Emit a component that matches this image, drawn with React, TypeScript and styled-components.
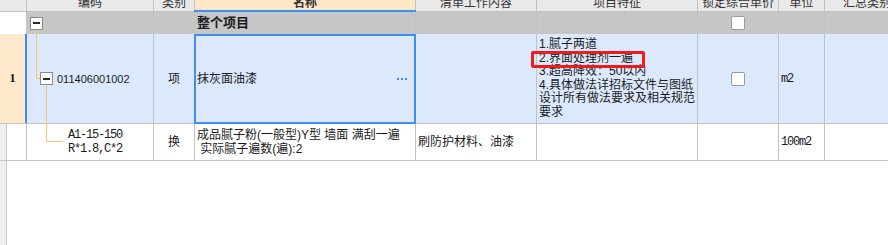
import styled, { createGlobalStyle } from 'styled-components';

const GlobalStyle = createGlobalStyle`
  html, body {
    margin: 0;
    padding: 0;
    background: #fff;
  }
  body {
    font-family: 'Liberation Sans', 'Noto Sans CJK SC', sans-serif;
    font-size: 12px;
    color: #111;
  }
`;

const COLS = '27px 127px 41px 221px 121px 161px 81px 46px 85px';
const GRID = '#c2c2c2';
const BLUE = '#3c8ef0';
const ORANGE = '#ffc36a';

const Page = styled.div`
  height: 100vh;
  overflow: hidden;
  display: flex;
  flex-direction: column;
`;

const Sheet = styled.div`
  margin-top: -11px;
  width: 910px;
  display: flex;
  flex-direction: column;
`;

const Row = styled.div<{ $h: number; $bg: string; $line?: boolean }>`
  display: grid;
  grid-template-columns: ${COLS};
  height: ${(p) => p.$h}px;
  background: ${(p) => p.$bg};
  border-bottom: ${(p) => (p.$line ? `1px solid ${GRID}` : 'none')};
  box-sizing: border-box;
`;

const Cell = styled.div<{ $center?: boolean; $bg?: string }>`
  position: relative;
  display: flex;
  align-items: center;
  justify-content: ${(p) => (p.$center ? 'center' : 'flex-start')};
  padding: 0 2px;
  border-right: 1px solid ${GRID};
  box-sizing: border-box;
  min-width: 0;
  white-space: nowrap;
  background: ${(p) => p.$bg ?? 'transparent'};
`;

const HeadCell = styled(Cell)<{ $active?: boolean }>`
  padding-top: 2px;
  color: #333;
  font-family: 'Noto Sans CJK SC', sans-serif;
  font-weight: ${(p) => (p.$active ? 700 : 400)};

  &::after {
    content: '';
    display: ${(p) => (p.$active ? 'block' : 'none')};
    position: absolute;
    left: -1px;
    right: -1px;
    bottom: -1px;
    height: 2px;
    background: ${BLUE};
  }
`;

const RowNo = styled(Cell)<{ $current?: boolean }>`
  font-family: 'Liberation Serif', serif;
  font-weight: 700;
  font-size: 12px;
  border-right: ${(p) => (p.$current ? `2px solid ${BLUE}` : `1px solid ${GRID}`)};
`;

const FrozenRowNo = styled(Cell)`
  box-shadow: inset 6px 0 0 #f0f0f0, inset 7px 0 0 #c8c8c8;
`;

const TreeCell = styled(Cell)<{ $indent: number }>`
  padding-left: ${(p) => p.$indent}px;
`;

const Connector = styled.span<{ $x: number; $y: number; $w: number; $h: number }>`
  position: absolute;
  left: ${(p) => p.$x}px;
  top: ${(p) => p.$y}px;
  width: ${(p) => p.$w}px;
  height: ${(p) => p.$h}px;
  background: ${ORANGE};
`;

const Toggle = styled.span`
  position: relative;
  z-index: 1;
  display: inline-flex;
  align-items: center;
  justify-content: center;
  width: 13px;
  height: 13px;
  box-sizing: border-box;
  border: 1px solid #8a8a8a;
  background: #fff;
  margin-right: 4px;

  &::before {
    content: '';
    width: 7px;
    height: 2px;
    background: #2a2a2a;
  }
`;

const Code = styled.span`
  font-family: 'Liberation Sans', sans-serif;
  font-size: 11px;
  color: #1a1a1a;
`;

const Mono = styled.span`
  font-family: 'Liberation Mono', monospace;
  font-size: 12px;
  letter-spacing: -1.2px;
  line-height: 14px;
  color: #1a1a1a;
`;

const Text = styled.span<{ $bold?: boolean; $size?: number }>`
  font-family: 'Liberation Sans', 'Noto Sans CJK SC', sans-serif;
  font-size: ${(p) => p.$size ?? 12}px;
  font-weight: ${(p) => (p.$bold ? 700 : 400)};
  line-height: 14px;
  color: #1a1a1a;
`;

const Lines = styled.div<{ $lh: number }>`
  display: flex;
  flex-direction: column;
  line-height: ${(p) => p.$lh}px;
  font-family: 'Liberation Sans', 'Noto Sans CJK SC', sans-serif;
  font-size: 12px;
  color: #1a1a1a;
  white-space: pre;
`;

const SelectedCell = styled(Cell)`
  &::after {
    content: '';
    position: absolute;
    left: -1px;
    right: -1px;
    top: 0;
    bottom: -1px;
    border: 2px solid ${BLUE};
    pointer-events: none;
  }
`;

const MoreDots = styled.span`
  position: absolute;
  right: 8px;
  top: 44px;
  display: flex;
  gap: 2px;

  & i {
    width: 2px;
    height: 2px;
    background: ${BLUE};
  }
`;

const Checkbox = styled.span`
  width: 14px;
  height: 14px;
  box-sizing: border-box;
  border: 1px solid #9b9b9b;
  border-radius: 2px;
  background: #fff;
`;

const Mark = styled.span`
  position: absolute;
  left: -6px;
  top: 17px;
  width: 114px;
  height: 17px;
  box-sizing: border-box;
  border: 3px solid #ee1b1b;
  border-radius: 2px;
  pointer-events: none;
`;

const Filler = styled.div`
  flex: 1;
  display: flex;
`;

const Strip = styled.div`
  width: 7px;
  box-sizing: border-box;
  background: #f0f0f0;
  border-right: 1px solid #c8c8c8;
`;

const headers = ['编码', '类别', '名称', '清单工作内容', '项目特征', '锁定综合单价', '单位', '汇总类别'];

const features = [
  '1.腻子两道',
  '2.界面处理剂一遍',
  '3.超高降效：50以内',
  '4.具体做法详招标文件与图纸',
  '设计所有做法要求及相关规范',
  '要求',
];

export default function App() {
  return (
    <Page>
      <GlobalStyle />
      <Sheet>
        <Row $h={23} $bg="#e9e9e9" $line>
          <HeadCell />
          {headers.map((h) => (
            <HeadCell key={h} $center $active={h === '名称'} $bg={h === '名称' ? '#fde7c7' : undefined}>
              {h}
            </HeadCell>
          ))}
        </Row>

        <Row $h={22} $bg="#c6c6c6">
          <Cell $bg="#fff" />
          <TreeCell $indent={3}>
            <Toggle />
            <Connector $x={9} $y={17} $w={1} $h={6} />
          </TreeCell>
          <Cell />
          <Cell>
            <Text $bold $size={13}>
              整个项目
            </Text>
          </Cell>
          <Cell />
          <Cell />
          <Cell $center>
            <Checkbox />
          </Cell>
          <Cell />
          <Cell />
        </Row>

        <Row $h={90} $bg="#dce9fc" $line>
          <RowNo $center $current $bg="#fde8cb">
            1
          </RowNo>
          <TreeCell $indent={13}>
            <Connector $x={9} $y={0} $w={1} $h={45} />
            <Connector $x={9} $y={44} $w={4} $h={1} />
            <Toggle />
            <Connector $x={19} $y={51} $w={1} $h={40} />
            <Code>011406001002</Code>
          </TreeCell>
          <Cell $center>
            <Text>项</Text>
          </Cell>
          <SelectedCell>
            <Text>抹灰面油漆</Text>
            <MoreDots>
              <i />
              <i />
              <i />
            </MoreDots>
          </SelectedCell>
          <Cell />
          <Cell>
            <Lines $lh={13.5}>
              {features.map((f) => (
                <span key={f}>{f}</span>
              ))}
            </Lines>
            <Mark />
          </Cell>
          <Cell $center>
            <Checkbox />
          </Cell>
          <Cell>
            <Mono>m2</Mono>
          </Cell>
          <Cell />
        </Row>

        <Row $h={37} $bg="#fff" $line>
          <FrozenRowNo />
          <TreeCell $indent={41}>
            <Connector $x={19} $y={0} $w={1} $h={18} />
            <Connector $x={19} $y={17} $w={17} $h={1} />
            <Lines $lh={14}>
              <Mono>A1-15-150</Mono>
              <Mono>R*1.8,C*2</Mono>
            </Lines>
          </TreeCell>
          <Cell $center>
            <Text>换</Text>
          </Cell>
          <Cell>
            <Lines $lh={14}>
              <span>成品腻子粉(一般型)Y型 墙面 满刮一遍</span>
              <span> 实际腻子遍数(遍):2</span>
            </Lines>
          </Cell>
          <Cell>
            <Text>刷防护材料、油漆</Text>
          </Cell>
          <Cell />
          <Cell />
          <Cell>
            <Mono>100m2</Mono>
          </Cell>
          <Cell />
        </Row>
      </Sheet>
      <Filler>
        <Strip />
      </Filler>
    </Page>
  );
}
